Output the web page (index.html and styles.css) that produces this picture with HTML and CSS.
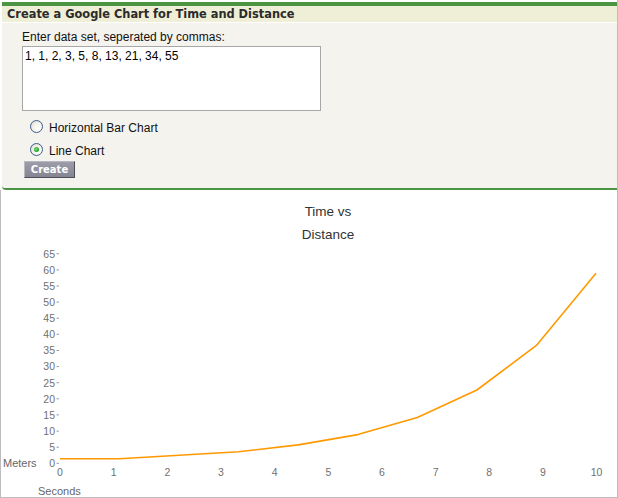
FILE: index.html
```html
<!DOCTYPE html>
<html>
<head>
<meta charset="utf-8">
<title>Google Chart</title>
<link rel="stylesheet" href="styles.css">
</head>
<body>
<div class="page">
  <div class="panel">
    <div class="panel-head">Create a Google Chart for Time and Distance</div>
    <div class="panel-body">
      <label class="field-label" for="data">Enter data set, seperated by commas:</label>
      <textarea id="data" class="data-input">1, 1, 2, 3, 5, 8, 13, 21, 34, 55</textarea>
      <div class="radio-row">
        <input type="radio" name="type" id="bar" class="radio">
        <label for="bar" class="radio-label">Horizontal Bar Chart</label>
      </div>
      <div class="radio-row">
        <input type="radio" name="type" id="line" class="radio" checked>
        <label for="line" class="radio-label">Line Chart</label>
      </div>
      <button class="create-btn" type="button">Create</button>
    </div>
  </div>
  <div class="chart">
    <svg class="chart-svg" width="616" height="307" viewBox="1 190 616 307" xmlns="http://www.w3.org/2000/svg">
      <g class="chart-title">
        <text x="328" y="215.5" text-anchor="middle">Time vs</text>
        <text x="328" y="238.5" text-anchor="middle">Distance</text>
      </g>
      <g class="y-labels" text-anchor="end">
        <text x="55" y="257.5">65</text>
        <text x="55" y="273.7">60</text>
        <text x="55" y="289.8">55</text>
        <text x="55" y="305.9">50</text>
        <text x="55" y="322">45</text>
        <text x="55" y="338.1">40</text>
        <text x="55" y="354.3">35</text>
        <text x="55" y="370.4">30</text>
        <text x="55" y="386.5">25</text>
        <text x="55" y="402.6">20</text>
        <text x="55" y="418.7">15</text>
        <text x="55" y="434.9">10</text>
        <text x="55" y="451">5</text>
        <text x="55" y="467.1">0</text>
      </g>
      <g class="ticks">
        <line x1="56.5" x2="59" y1="253.7" y2="253.7"/>
        <line x1="56.5" x2="59" y1="269.9" y2="269.9"/>
        <line x1="56.5" x2="59" y1="286" y2="286"/>
        <line x1="56.5" x2="59" y1="302.1" y2="302.1"/>
        <line x1="56.5" x2="59" y1="318.2" y2="318.2"/>
        <line x1="56.5" x2="59" y1="334.3" y2="334.3"/>
        <line x1="56.5" x2="59" y1="350.5" y2="350.5"/>
        <line x1="56.5" x2="59" y1="366.6" y2="366.6"/>
        <line x1="56.5" x2="59" y1="382.7" y2="382.7"/>
        <line x1="56.5" x2="59" y1="398.8" y2="398.8"/>
        <line x1="56.5" x2="59" y1="414.9" y2="414.9"/>
        <line x1="56.5" x2="59" y1="431.1" y2="431.1"/>
        <line x1="56.5" x2="59" y1="447.2" y2="447.2"/>
        <line x1="56.5" x2="59" y1="463.3" y2="463.3"/>
      </g>
      <g class="x-labels" text-anchor="middle">
        <text x="60" y="476">0</text>
        <text x="113.7" y="476">1</text>
        <text x="167.3" y="476">2</text>
        <text x="221" y="476">3</text>
        <text x="274.6" y="476">4</text>
        <text x="328.3" y="476">5</text>
        <text x="381.9" y="476">6</text>
        <text x="435.6" y="476">7</text>
        <text x="489.2" y="476">8</text>
        <text x="542.9" y="476">9</text>
        <text x="596.5" y="476">10</text>
      </g>
      <g class="axis-titles">
        <text x="3" y="467">Meters</text>
        <text x="38" y="495">Seconds</text>
      </g>
      <polyline class="series" points="60,458.7 119.6,458.7 179.1,455.2 238.7,451.8 298.2,444.9 357.8,434.6 417.3,417.5 476.9,390 536.4,345.4 596,273.3"/>
    </svg>
  </div>
</div>
</body>
</html>
```

FILE: styles.css
```css
html, body {
  margin: 0;
  padding: 0;
  background: #ffffff;
}

.page {
  width: 618px;
  height: 498px;
  box-sizing: border-box;
  border-right: 1px solid #bdbdbd;
  padding-top: 2px;
  display: flex;
  flex-direction: column;
  font-family: "Liberation Sans", Arial, sans-serif;
}

.panel {
  margin-left: 2px;
  background: #f5f3ee;
  border-top: 4px solid #4b9441;
  border-bottom: 2px solid #4b9441;
  border-bottom-left-radius: 4px;
  height: 188px;
  box-sizing: border-box;
}

.panel-head {
  height: 16px;
  background: #efeed6;
  border-bottom: 1px solid #ffffff;
  padding-left: 5px;
  font-family: "DejaVu Sans", Verdana, sans-serif;
  font-weight: bold;
  font-size: 11.4px;
  line-height: 16px;
  color: #2b2b2b;
  white-space: nowrap;
}

.panel-body {
  padding: 7px 0 0 20px;
  display: flex;
  flex-direction: column;
  align-items: flex-start;
}

.field-label {
  font-size: 12px;
  line-height: 14px;
  color: #111;
  margin-bottom: 2px;
}

.data-input {
  width: 299px;
  height: 65px;
  box-sizing: border-box;
  border: 1px solid #a7a7a7;
  padding: 2px 2px;
  margin: 0 0 4px 0;
  font-family: "Liberation Sans", Arial, sans-serif;
  font-size: 12px;
  line-height: 14px;
  color: #000;
  background: #fff;
  resize: none;
  outline: none;
}

.radio-row {
  height: 23px;
  display: flex;
  align-items: center;
  padding-left: 8px;
}

.radio {
  appearance: none;
  -webkit-appearance: none;
  width: 13px;
  height: 13px;
  margin: 0 6px 0 0;
  border: 1px solid #3c5d8c;
  border-radius: 50%;
  box-sizing: border-box;
  background: radial-gradient(circle at 65% 65%, #ffffff 0%, #f4f4ee 45%, #d6d6cc 100%);
  position: relative;
}

.radio:checked::after {
  content: "";
  position: absolute;
  left: 3px;
  top: 3px;
  width: 5px;
  height: 5px;
  border-radius: 50%;
  background: radial-gradient(circle at 40% 40%, #7fe07a 0%, #28a628 60%, #1b8a1b 100%);
}

.radio-label {
  font-size: 12px;
  line-height: 14px;
  color: #111;
  margin-top: 2px;
}

.create-btn {
  margin-left: 2px;
  width: 51px;
  height: 17px;
  padding: 0;
  border: 1px solid;
  border-color: #b8b8c2 #4e4e58 #4e4e58 #b8b8c2;
  background: linear-gradient(#9d9daa, #858592);
  color: #ffffff;
  font-family: "DejaVu Sans", Verdana, sans-serif;
  font-weight: bold;
  font-size: 10px;
  line-height: 15px;
  text-align: center;
}

.chart {
  flex: 1;
  border-left: 1px solid #bdbdbd;
  border-bottom: 1px solid #bdbdbd;
  background: #ffffff;
}

.chart-svg {
  display: block;
}

.chart-title text {
  font-family: "Liberation Sans", Arial, sans-serif;
  font-size: 13.5px;
  fill: #333333;
}

.y-labels text,
.x-labels text {
  font-family: "Liberation Sans", Arial, sans-serif;
  font-size: 10.5px;
  fill: #707070;
}

.axis-titles text {
  font-family: "Liberation Sans", Arial, sans-serif;
  font-size: 11px;
  fill: #666666;
}

.ticks line {
  stroke: #9a9a9a;
  stroke-width: 1;
}

.series {
  fill: none;
  stroke: #ff9900;
  stroke-width: 1.6;
  stroke-linejoin: round;
}
```
